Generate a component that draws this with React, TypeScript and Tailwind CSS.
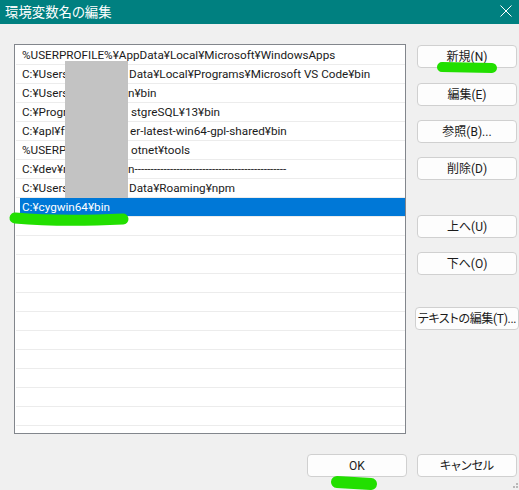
import React from "react";

type Row = { left: string; right?: string; lw?: string; selected?: boolean };

const rows: Row[] = [
  { left: "%USERPROFILE%¥AppData¥Local¥Microsoft¥WindowsApps" },
  { left: "C:¥Users¥", right: "Data¥Local¥Programs¥Microsoft VS Code¥bin", lw: "w-[107px]" },
  { left: "C:¥Users¥", right: "n¥bin", lw: "w-[106px]" },
  { left: "C:¥Program", right: "stgreSQL¥13¥bin", lw: "w-[109px]" },
  { left: "C:¥apl¥ff", right: "er-latest-win64-gpl-shared¥bin", lw: "w-[108px]" },
  { left: "%USERPRO", right: "otnet¥tools", lw: "w-[109px]" },
  { left: "C:¥dev¥ru", right: "n-----------------------------------------------", lw: "w-[106px]" },
  { left: "C:¥Users¥", right: "Data¥Roaming¥npm", lw: "w-[107px]" },
  { left: "C:¥cygwin64¥bin", selected: true },
];

const emptyRows = Array.from({ length: 12 });

function Btn({ label, cls }: { label: string; cls: string }) {
  return (
    <button
      className={`h-[23px] rounded-[4px] border border-[#d0d0d0] bg-[#fdfdfd] text-[12px] leading-none text-[#1b1b1b] [font-feature-settings:'palt'] whitespace-nowrap ${cls}`}
    >
      {label}
    </button>
  );
}

export default function App() {
  return (
    <div
      className="relative w-[519px] h-[490px] overflow-hidden bg-[#f0f0f0] flex flex-col"
      style={{ fontFamily: 'Roboto, "Noto Sans CJK JP", sans-serif' }}
    >
      {/* title bar */}
      <div className="h-[24px] shrink-0 bg-[#008080] flex items-center justify-between pl-[5px] pr-[7px]">
        <span className="text-white text-[13.4px] leading-none [font-feature-settings:'palt'] mt-[1px]">
          環境変数名の編集
        </span>
        <svg width="12" height="12" viewBox="0 0 12 12" className="mb-[2px]">
          <path d="M0.5 0.5 L11.5 11.5 M11.5 0.5 L0.5 11.5" stroke="#ffffff" strokeWidth="1" />
        </svg>
      </div>

      <div className="flex pl-[14px] pt-[20px]">
        {/* path list */}
        <div className="relative w-[392px] h-[390px] border border-[#82868c] bg-white pt-px overflow-hidden">
          {rows.map((r, i) => (
            <div key={i} className="h-[19px] border-b border-[#ececec] ml-px flex">
              {r.selected ? (
                <div className="ml-[4px] flex-1 bg-[#0078d7] text-white text-[11.7px] flex items-center pl-[2px] whitespace-nowrap">
                  <span className="mt-[1px]">{r.left}</span>
                </div>
              ) : (
                <div className="pl-[6px] flex items-center text-[11.7px] text-[#1a1a1a] whitespace-nowrap">
                  {r.right ? (
                    <>
                      <span className={`${r.lw} overflow-hidden shrink-0 mt-[1px]`}>{r.left}</span>
                      <span className="mt-[1px]">{r.right}</span>
                    </>
                  ) : (
                    <span className="mt-[1px]">{r.left}</span>
                  )}
                </div>
              )}
            </div>
          ))}
          {emptyRows.map((_, i) => (
            <div key={`e${i}`} className="h-[19px] border-b border-[#ececec] ml-px" />
          ))}
          {/* redaction block */}
          <div className="absolute left-[50px] top-[16px] w-[63px] h-[137px] bg-[#c3c3c3]" />
        </div>

        {/* side buttons */}
        <div className="flex flex-col ml-[11px] items-start">
          <Btn label="新規(N)" cls="w-[100px] mt-px" />
          <Btn label="編集(E)" cls="w-[100px] mt-[15px]" />
          <Btn label="参照(B)..." cls="w-[100px] mt-[14px]" />
          <Btn label="削除(D)" cls="w-[100px] mt-[14px]" />
          <Btn label="上へ(U)" cls="w-[100px] mt-[35px]" />
          <Btn label="下へ(O)" cls="w-[100px] mt-[14px]" />
          <Btn label="テキストの編集(T)..." cls="w-[104px] -ml-[2px] mt-[32px] px-0 tracking-[-0.3px]" />
        </div>
      </div>

      {/* dialog buttons */}
      <div className="flex justify-end gap-[10px] pr-[2px] mt-[20px]">
        <Btn label="OK" cls="w-[100px]" />
        <Btn label="キャンセル" cls="w-[100px]" />
      </div>

      {/* marker strokes and resize grip */}
      <svg className="absolute inset-0 pointer-events-none" width="519" height="490" viewBox="0 0 519 490">
        <path d="M442 67 L492 68" stroke="#22df00" strokeWidth="10" strokeLinecap="round" />
        <path d="M15 218 Q 60 222 123 219" stroke="#22df00" strokeWidth="11" strokeLinecap="round" fill="none" />
        <path d="M337 482 L371 484" stroke="#22df00" strokeWidth="12" strokeLinecap="round" />
        <g fill="#b8b8b8">
          <rect x="516" y="483" width="2" height="2" />
          <rect x="513" y="486" width="2" height="2" />
          <rect x="516" y="486" width="2" height="2" />
        </g>
      </svg>
    </div>
  );
}
